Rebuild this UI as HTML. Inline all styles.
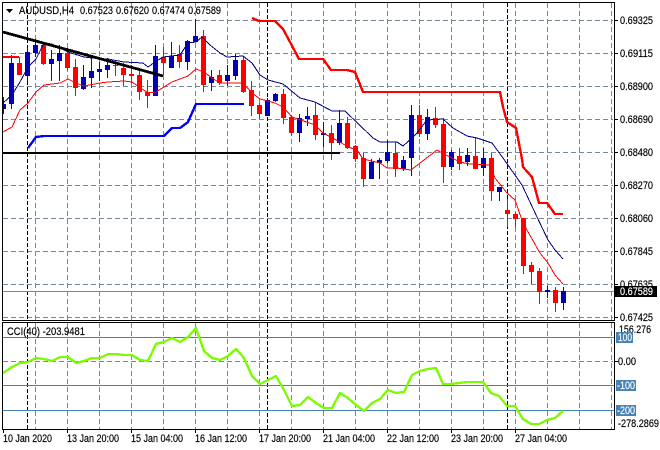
<!DOCTYPE html>
<html><head><meta charset="utf-8"><style>
html,body{margin:0;padding:0;background:#fff;width:660px;height:450px;overflow:hidden}
svg{display:block}
text{font-family:"Liberation Sans",sans-serif;font-size:11px;fill:#000;stroke:#000;stroke-width:.18}
text.w{fill:#fff;stroke:#fff}
</style></head><body>
<svg width="660" height="450" viewBox="0 0 660 450" xmlns="http://www.w3.org/2000/svg">
<rect width="660" height="450" fill="#fff"/>
<!-- grid -->
<g shape-rendering="crispEdges" fill="none" stroke="#778899" stroke-width="1" stroke-dasharray="5 3">
<path d="M3 20.5H613M3 53.5H613M3 86.5H613M3 119.5H613M3 152.5H613M3 185.5H613M3 218.5H613M3 251.5H613M3 284.5H613M3 317.5H613M3 361.5H613"/>
<path d="M35.5 3V320M67.5 3V320M99.5 3V320M131.5 3V320M163.5 3V320M195.5 3V320M227.5 3V320M259.5 3V320M291.5 3V320M323.5 3V320M355.5 3V320M387.5 3V320M419.5 3V320M451.5 3V320M483.5 3V320M515.5 3V320M547.5 3V320M579.5 3V320M611.5 3V320"/>
<path d="M35.5 323V429M67.5 323V429M99.5 323V429M131.5 323V429M163.5 323V429M195.5 323V429M227.5 323V429M259.5 323V429M291.5 323V429M323.5 323V429M355.5 323V429M387.5 323V429M419.5 323V429M451.5 323V429M483.5 323V429M515.5 323V429M547.5 323V429M579.5 323V429M611.5 323V429"/>
</g>
<g shape-rendering="crispEdges" fill="none" stroke="#000" stroke-width="1" stroke-dasharray="4 2">
<path d="M27.5 3V320M267.5 3V320M507.5 3V320M27.5 323V429M267.5 323V429M507.5 323V429"/>
</g>
<!-- CCI levels -->
<g shape-rendering="crispEdges" stroke="#4682b4" stroke-width="1" fill="none">
<path d="M3 337.5H614M3 385.5H614M3 410.5H614"/>
</g>
<!-- current price line -->
<path d="M3 291.5H614" stroke="#778899" stroke-width="1" shape-rendering="crispEdges"/>
<!-- candle wicks -->
<g shape-rendering="crispEdges" fill="none" stroke-width="1">
<path stroke="#0000ff" d="M3.5 97V114M11.5 55V109M27.5 48V83M35.5 39V57M51.5 50V81M59.5 45V81M83.5 65V90M91.5 57V88M99.5 62V81M107.5 58V78M155.5 45V96M171.5 42V68M187.5 40V70M195.5 19V42M211.5 70V91M227.5 65V86M235.5 54V80M267.5 98V116M275.5 93V102M299.5 114V142M307.5 107V126M323.5 122V147M339.5 110V145M371.5 159V179M379.5 158V179M387.5 140V163M403.5 156V171M411.5 105V176M427.5 109V140M451.5 150V170M467.5 148V166M483.5 148V176M499.5 187V201M547.5 286V298M563.5 287V310"/>
<path stroke="#ff0000" d="M19.5 57V75M43.5 42V65M67.5 48V70M75.5 59V96M115.5 60V76M123.5 63V86M131.5 65V83M139.5 68V100M147.5 80V108M163.5 47V75M179.5 45V68M203.5 30V92M219.5 70V85M243.5 57V93M251.5 81V116M259.5 103V119M283.5 89V124M291.5 115V136M315.5 102V140M331.5 125V160M347.5 117V149M355.5 145V162M363.5 153V187M395.5 142V177M419.5 105V137M435.5 107V128M443.5 118V183M459.5 148V170M475.5 137V169M491.5 153V201M507.5 199V227M515.5 212V227M523.5 218V274M531.5 262V284M539.5 268V304M555.5 287V312"/>
</g>
<!-- candle bodies -->
<g shape-rendering="crispEdges">
<path fill="#0000b4" d="M3 104h3v5h-3zM9 63h5v41h-5zM25 52h5v24h-5zM33 45h5v8h-5zM49 59h5v5h-5zM57 53h5v8h-5zM81 77h5v12h-5zM89 71h5v7h-5zM97 69h5v3h-5zM105 65h5v5h-5zM153 56h5v40h-5zM169 56h5v12h-5zM185 41h5v21h-5zM193 36h5v6h-5zM209 77h5v6h-5zM225 75h5v6h-5zM233 60h5v16h-5zM265 100h5v16h-5zM273 94h5v7h-5zM297 118h5v15h-5zM305 116h5v3h-5zM321 133h5v2h-5zM337 123h5v20h-5zM369 162h5v17h-5zM377 160h5v3h-5zM385 152h5v9h-5zM401 160h5v9h-5zM409 115h5v43h-5zM425 117h5v17h-5zM449 152h5v15h-5zM465 155h5v7h-5zM481 158h5v10h-5zM497 187h5v5h-5zM545 290h5v2h-5zM561 291h5v12h-5z"/>
<path fill="#ff0000" d="M17 63h5v12h-5zM41 45h5v19h-5zM65 53h5v15h-5zM73 67h5v21h-5zM113 65h5v1h-5zM121 68h5v7h-5zM129 74h5v2h-5zM137 75h5v17h-5zM145 92h5v4h-5zM161 57h5v6h-5zM177 54h5v8h-5zM201 36h5v49h-5zM217 75h5v8h-5zM241 60h5v32h-5zM249 90h5v16h-5zM257 105h5v9h-5zM281 94h5v24h-5zM289 117h5v16h-5zM313 115h5v20h-5zM329 133h5v10h-5zM345 123h5v25h-5zM353 146h5v13h-5zM361 158h5v21h-5zM393 153h5v16h-5zM417 115h5v19h-5zM433 118h5v7h-5zM441 124h5v43h-5zM457 156h5v8h-5zM473 156h5v13h-5zM489 158h5v33h-5zM505 210h5v4h-5zM513 214h5v5h-5zM521 218h5v48h-5zM529 265h5v7h-5zM537 271h5v21h-5zM553 290h5v13h-5z"/>
</g>
<!-- thin moving averages -->
<g fill="none" stroke-linejoin="round" shape-rendering="crispEdges">
<polyline stroke="#000080" stroke-width="1" points="3,103 12,95 20,82 28,67 36,59 44,43 52,44 68,52 84,57 92,58 108,59 124,62 143,63 148,67 155,62 163,57 180,55 188,43 196,42 202,37 210,45 220,53 227,57 243,56 252,63 260,75 268,80 283,84 300,98 315,102 332,111 345,111 373,138 380,142 397,142 403,146 412,138 417,133 427,120 443,119 453,128 467,136 477,138 492,143 503,158 522,185 537,217 548,240 555,250 563,259"/>
<polyline stroke="#ff0000" stroke-width="1" points="3,132 12,127 20,110 28,103 36,92 44,85 60,83 68,79 76,83 84,86 100,83 108,82 124,81 132,82 148,93 156,92 172,82 188,76 196,69 204,72 212,78 220,83 233,83 243,83 252,93 260,99 275,103 283,107 292,117 315,125 323,133 340,142 348,147 357,150 363,159 380,163 387,168 397,168 411,170 437,150 444,154 460,162 470,164 490,165 495,178 507,193 515,200 523,223 540,253 548,263 555,275 563,284"/>
</g>
<!-- thick envelope lines -->
<g fill="none" stroke-linejoin="round" shape-rendering="crispEdges">
<polyline stroke="#ff0000" stroke-width="2" points="3,57 19,57"/>
<polyline stroke="#ff0000" stroke-width="2.4" points="252,18 259,21 275,21 283,29 290,42 299,59 323,59 331,70 347,70 355,72 363,92 500,92 503,107 507,122 516,128 522,159 523,167 532,177 539,203 547,203 555,214 563,214"/>
<polyline stroke="#0000ff" stroke-width="2.4" points="28,148 36,137 44,136 164,136 172,128 180,128 188,122 196,104 244,104"/>
<polyline stroke="#000" stroke-width="2.8" points="3,32 163,76"/>
<path stroke="#000" stroke-width="2" d="M3 153H340"/>
</g>
<!-- CCI -->
<polyline fill="none" stroke="#7cfc00" stroke-width="2.4" stroke-linejoin="round" shape-rendering="crispEdges" points="3,373 12,367 20,363 28,362 36,358 44,359 52,361 60,357 68,357 76,363 84,361 92,358 100,358 108,354 116,354 124,355 132,355 140,360 148,361 156,344 164,342 172,338 180,342 188,337 196,328 204,351 212,358 220,360 228,356 236,349 244,358 252,376 260,384 268,380 276,376 284,390 292,406 300,405 308,397 316,403 324,408 332,408 340,393 348,398 356,405 364,411 372,403 380,399 388,390 396,393 404,392 412,375 420,371 428,369 436,368 443,384 451,384 459,383 467,382 483,382 491,393 499,396 507,406 515,406 523,419 531,424 539,424 547,420 555,418 563,411"/>
<!-- frames -->
<g shape-rendering="crispEdges" fill="none" stroke="#000" stroke-width="1">
<rect x="2.5" y="2.5" width="612" height="318"/>
<rect x="2.5" y="322.5" width="612" height="107"/>
<path d="M615 20.5h3M615 53.5h3M615 86.5h3M615 119.5h3M615 152.5h3M615 185.5h3M615 218.5h3M615 251.5h3M615 284.5h3M615 317.5h3M615 361.5h3"/>
<path d="M3.5 430v3M67.5 430v3M131.5 430v3M195.5 430v3M259.5 430v3M323.5 430v3M387.5 430v3M451.5 430v3M515.5 430v3"/>
</g>
<!-- header -->
<path d="M6 9h7l-3.5 4z" fill="#000"/>
<text x="19" y="14" textLength="55" lengthAdjust="spacingAndGlyphs">AUDUSD,H4</text>
<text x="80" y="14" textLength="33" lengthAdjust="spacingAndGlyphs">0.67523</text>
<text x="116" y="14" textLength="33" lengthAdjust="spacingAndGlyphs">0.67620</text>
<text x="152" y="14" textLength="33" lengthAdjust="spacingAndGlyphs">0.67474</text>
<text x="188" y="14" textLength="33" lengthAdjust="spacingAndGlyphs">0.67589</text>
<text x="7" y="335" textLength="78" lengthAdjust="spacingAndGlyphs">CCI(40) -203.9481</text>
<!-- price axis -->
<text x="620" y="24" textLength="33" lengthAdjust="spacingAndGlyphs">0.69325</text>
<text x="620" y="57" textLength="33" lengthAdjust="spacingAndGlyphs">0.69115</text>
<text x="620" y="90" textLength="33" lengthAdjust="spacingAndGlyphs">0.68900</text>
<text x="620" y="123" textLength="33" lengthAdjust="spacingAndGlyphs">0.68690</text>
<text x="620" y="156" textLength="33" lengthAdjust="spacingAndGlyphs">0.68480</text>
<text x="620" y="189" textLength="33" lengthAdjust="spacingAndGlyphs">0.68270</text>
<text x="620" y="222" textLength="33" lengthAdjust="spacingAndGlyphs">0.68060</text>
<text x="620" y="255" textLength="33" lengthAdjust="spacingAndGlyphs">0.67845</text>
<text x="620" y="288" textLength="33" lengthAdjust="spacingAndGlyphs">0.67635</text>
<rect x="615" y="286" width="42" height="11" fill="#000" shape-rendering="crispEdges"/>
<text class="w" x="620" y="295" textLength="33" lengthAdjust="spacingAndGlyphs">0.67589</text>
<text x="620" y="321" textLength="33" lengthAdjust="spacingAndGlyphs">0.67425</text>
<!-- CCI axis -->
<text x="619" y="333" textLength="32" lengthAdjust="spacingAndGlyphs">156.276</text>
<g shape-rendering="crispEdges" fill="#4682b4">
<rect x="616" y="332" width="17" height="11"/>
<rect x="616" y="380" width="20" height="11"/>
<rect x="616" y="405" width="20" height="11"/>
</g>
<text class="w" x="618" y="341" textLength="14" lengthAdjust="spacingAndGlyphs">100</text>
<text x="618" y="365" textLength="18" lengthAdjust="spacingAndGlyphs">0.00</text>
<text class="w" x="617" y="389" textLength="18" lengthAdjust="spacingAndGlyphs">-100</text>
<text class="w" x="617" y="414" textLength="18" lengthAdjust="spacingAndGlyphs">-200</text>
<text x="618" y="427" textLength="41" lengthAdjust="spacingAndGlyphs">-278.2869</text>
<!-- time axis -->
<text x="3" y="442" textLength="49" lengthAdjust="spacingAndGlyphs">10 Jan 2020</text>
<text x="67" y="442" textLength="52" lengthAdjust="spacingAndGlyphs">13 Jan 20:00</text>
<text x="131" y="442" textLength="52" lengthAdjust="spacingAndGlyphs">15 Jan 04:00</text>
<text x="195" y="442" textLength="52" lengthAdjust="spacingAndGlyphs">16 Jan 12:00</text>
<text x="259" y="442" textLength="52" lengthAdjust="spacingAndGlyphs">17 Jan 20:00</text>
<text x="323" y="442" textLength="52" lengthAdjust="spacingAndGlyphs">21 Jan 04:00</text>
<text x="387" y="442" textLength="52" lengthAdjust="spacingAndGlyphs">22 Jan 12:00</text>
<text x="451" y="442" textLength="52" lengthAdjust="spacingAndGlyphs">23 Jan 20:00</text>
<text x="515" y="442" textLength="52" lengthAdjust="spacingAndGlyphs">27 Jan 04:00</text>
</svg>
</body></html>
